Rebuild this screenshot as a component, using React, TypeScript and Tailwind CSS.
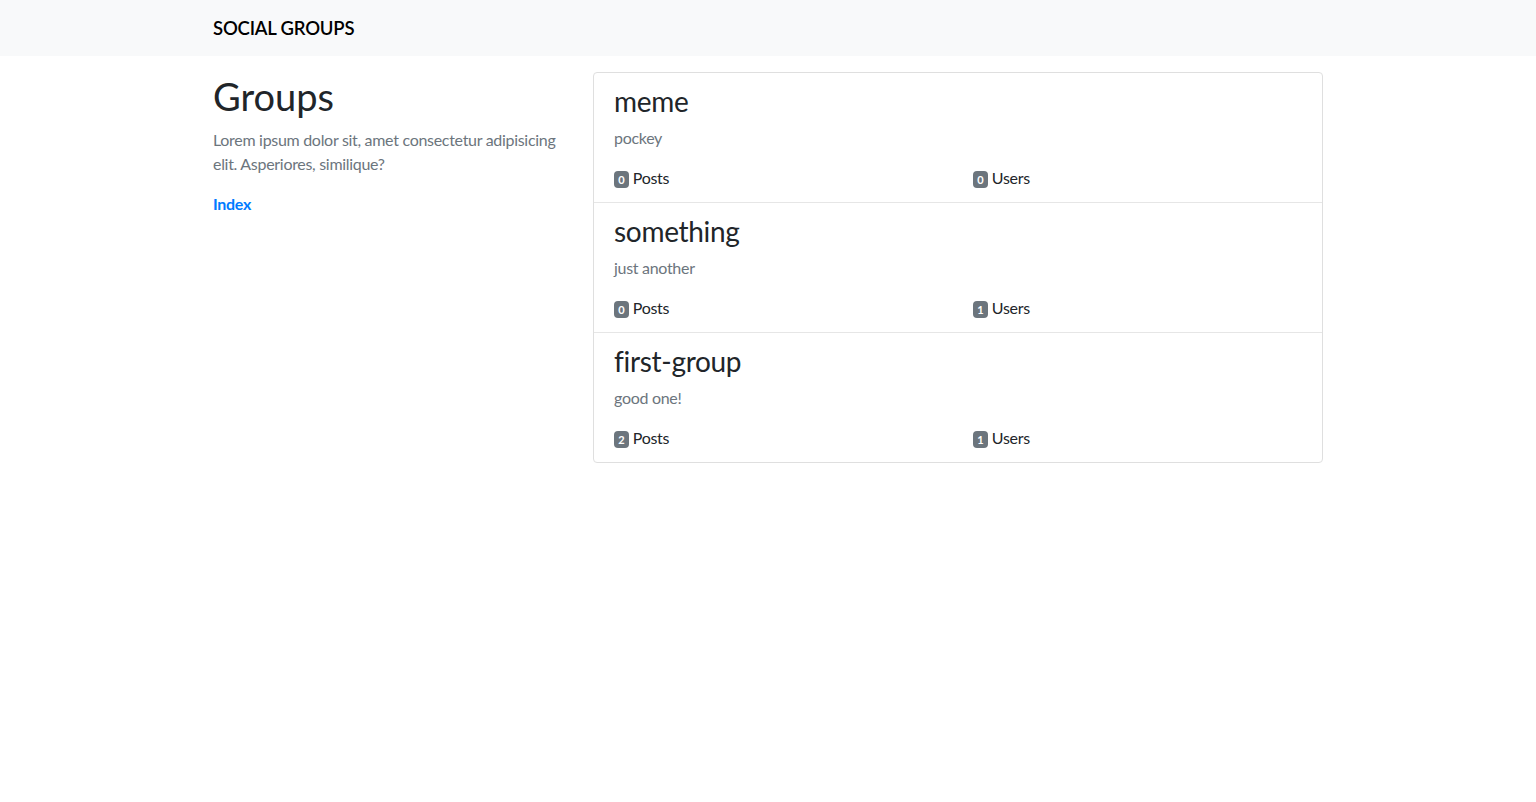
import React from "react";

const groups = [
  { name: "meme", desc: "pockey", posts: 0, users: 0 },
  { name: "something", desc: "just another", posts: 0, users: 1 },
  { name: "first-group", desc: "good one!", posts: 2, users: 1 },
];

function Badge({ n }: { n: number }) {
  return (
    <span className="inline-block h-[17px] min-w-[15px] rounded-[4px] bg-[#6c757d] px-[4px] text-center align-middle text-[11px] leading-[17px] font-bold tracking-normal text-white">
      {n}
    </span>
  );
}

export default function App() {
  return (
    <div className="min-h-screen bg-white text-[#212529]" style={{ fontFamily: "Lato, 'Noto Sans', sans-serif" }}>
      <nav className="h-[56px] bg-[#f8f9fa]">
        <div className="mx-auto flex h-full w-[1140px] items-center px-[15px] pt-[2px]">
          <span className="text-[18.5px] font-semibold tracking-[-0.2px] text-black">SOCIAL GROUPS</span>
        </div>
      </nav>
      <div className="mx-auto mt-4 flex w-[1140px]">
        <div className="w-[380px] px-[15px]">
          <h1 className="mb-2 text-[38px] leading-[48px] font-normal">Groups</h1>
          <p className="mb-4 text-[16px] leading-6 tracking-[-0.3px] text-[#6c757d]">
            Lorem ipsum dolor sit, amet consectetur adipisicing elit. Asperiores, similique?
          </p>
          <a href="#" className="text-[16px] leading-6 font-bold tracking-[-0.3px] text-[#007bff]">
            Index
          </a>
        </div>
        <div className="w-[760px] px-[15px]">
          <div className="rounded-[4px] border border-[#dfdfdf]">
            {groups.map((g, i) => (
              <div
                key={g.name}
                className={`px-5 py-3 ${i > 0 ? "border-t border-[#e6e6e6]" : ""}`}
              >
                <h3 className="mb-2 text-[28px] leading-[33px] font-normal tracking-[-0.3px]">{g.name}</h3>
                <p className="mb-4 text-[16px] leading-6 tracking-[-0.3px] text-[#6c757d]">{g.desc}</p>
                <div className="-mx-[15px] flex text-[16px] leading-6 tracking-[-0.3px]">
                  <div className="w-1/2 px-[15px]">
                    <Badge n={g.posts} /> Posts
                  </div>
                  <div className="w-1/2 px-[15px]">
                    <Badge n={g.users} /> Users
                  </div>
                </div>
              </div>
            ))}
          </div>
        </div>
      </div>
    </div>
  );
}
